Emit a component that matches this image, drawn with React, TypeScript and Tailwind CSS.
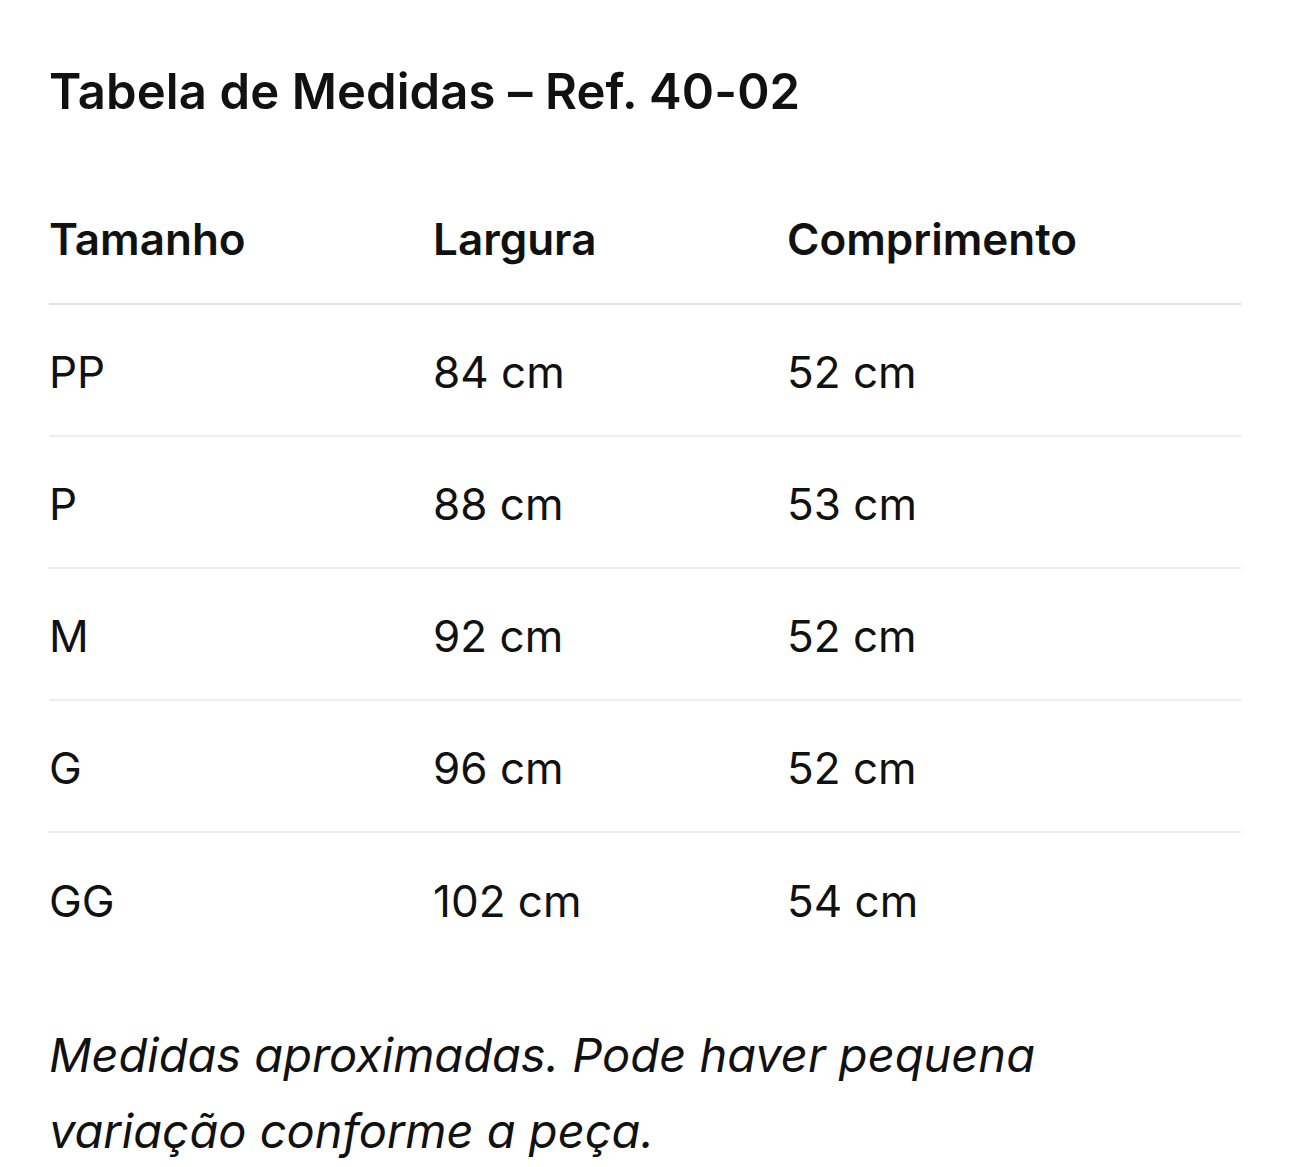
const rows = [
  { size: "PP", width: "84 cm", length: "52 cm" },
  { size: "P", width: "88 cm", length: "53 cm" },
  { size: "M", width: "92 cm", length: "52 cm" },
  { size: "G", width: "96 cm", length: "52 cm" },
  { size: "GG", width: "102 cm", length: "54 cm" },
];

export default function App() {
  return (
    <div className="min-h-screen bg-white px-[49px] pt-[62px] text-[#111111] font-['Inter',sans-serif]">
      <h1 className="text-[49px] leading-[60px] font-semibold tracking-[0.1px]">
        Tabela de Medidas – Ref. 40-02
      </h1>

      <div className="mt-[51px] w-[1192px]">
        {/* header */}
        <div className="grid h-[132px] grid-cols-[384px_354px_1fr] items-center border-b-2 border-[#e3e3e3] pt-[2px] text-[44px] font-semibold">
          <span>Tamanho</span>
          <span>Largura</span>
          <span>Comprimento</span>
        </div>

        {rows.map((row, i) => (
          <div
            key={row.size}
            className={
              i < rows.length - 1
                ? "grid h-[132px] grid-cols-[384px_354px_1fr] items-center border-b-2 border-[#ececec] pt-[3px] text-[44px]"
                : "grid h-[132px] grid-cols-[384px_354px_1fr] items-center pt-[3px] text-[44px]"
            }
          >
            <span>{row.size}</span>
            <span>{row.width}</span>
            <span>{row.length}</span>
          </div>
        ))}
      </div>

      <p className="mt-[52px] w-[1150px] text-[47px] leading-[76px] italic">
        Medidas aproximadas. Pode haver pequena
        <br />
        variação conforme a peça.
      </p>
    </div>
  );
}
